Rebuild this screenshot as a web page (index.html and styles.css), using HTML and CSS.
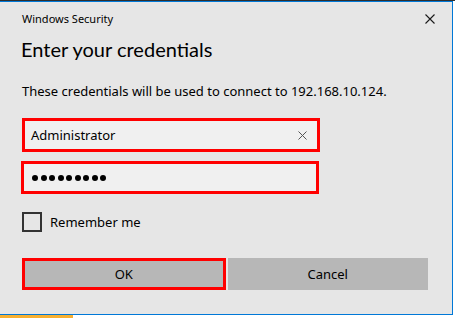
FILE: index.html
```html
<!DOCTYPE html>
<html lang="en">
  <head>
    <meta charset="UTF-8" />
    <title>Windows Security</title>
    <link rel="stylesheet" href="styles.css">
  </head>
  <body>
    <div class="top-strip"></div>
    <div class="dialog">
      <div class="header">
        <span class="caption">Windows Security</span>
        <svg class="close" width="10" height="10" viewBox="0 0 10 10">
          <path d="M0.5 0.5 L9.5 9.5 M9.5 0.5 L0.5 9.5" stroke="#1a1a1a" stroke-width="1.1" fill="none" />
        </svg>
      </div>
      <h2>Enter your credentials</h2>
      <p class="message">These credentials will be used to connect to 192.168.10.124.</p>

      <div class="field user">
        <span class="value">Administrator</span>
        <svg class="clear" width="9" height="9" viewBox="0 0 9 9">
          <path d="M0.5 0.5 L8.5 8.5 M8.5 0.5 L0.5 8.5" stroke="#555" stroke-width="1" fill="none" />
        </svg>
      </div>
      <div class="field pass">
        <span class="dot"></span><span class="dot"></span><span class="dot"></span>
        <span class="dot"></span><span class="dot"></span><span class="dot"></span>
        <span class="dot"></span><span class="dot"></span><span class="dot"></span>
      </div>

      <label class="remember">
        <span class="box"></span>
        <span>Remember me</span>
      </label>

      <div class="buttons">
        <button class="ok">OK</button>
        <button class="cancel">Cancel</button>
      </div>
    </div>
    <div class="taskbar"></div>
  </body>
</html>
```

FILE: styles.css
```css
body {
  margin: 0;
  background: #ffffff;
  font-family: "Noto Sans", "Open Sans", sans-serif;
  color: #000;
  width: 455px;
  height: 318px;
  overflow: hidden;
}

.top-strip {
  height: 1px;
  background: #2e2e2e;
}

.dialog {
  box-sizing: border-box;
  width: 453px;
  height: 314px;
  background: #e6e6e6;
  border-top: 1px solid #0078d7;
  border-right: 1px solid #0078d7;
  border-bottom: 1px solid #0078d7;
  padding: 0 24px 0 22px;
}

.header {
  height: 34px;
  display: flex;
  align-items: center;
  justify-content: space-between;
  margin-right: -7px;
}

.caption {
  font-size: 11px;
  line-height: 16px;
}

h2 {
  margin: 0;
  font-family: Lato, "Noto Sans", sans-serif;
  font-size: 20px;
  font-weight: normal;
  line-height: 26px;
  margin-left: -1px;
}

.message {
  margin: 20px 0 0;
  font-size: 13px;
  line-height: 18px;
}

.field {
  box-sizing: border-box;
  width: 298px;
  display: flex;
  align-items: center;
  background: #f0f0f0;
  border: 3px solid #ff0000;
  padding: 0 0 0 6px;
}

.user {
  height: 34px;
  margin-top: 18px;
  justify-content: space-between;
  padding-right: 10px;
}

.value {
  font-size: 13px;
  line-height: 18px;
}

.pass {
  height: 33px;
  margin-top: 9px;
  margin-left: -1px;
  gap: 2.5px;
  padding-left: 8px;
}

.dot {
  width: 6px;
  height: 6px;
  border-radius: 50%;
  background: #000;
}

.remember {
  display: flex;
  align-items: center;
  gap: 8px;
  margin-top: 18px;
  font-size: 13px;
  line-height: 18px;
}

.box {
  box-sizing: border-box;
  width: 20px;
  height: 20px;
  border: 2px solid #333;
}

.buttons {
  display: flex;
  gap: 2px;
  margin-top: 26px;
}

button {
  box-sizing: border-box;
  height: 32px;
  background: #b7b7b7;
  border: none;
  font-family: inherit;
  font-size: 13px;
  color: #000;
  padding: 0;
}

.ok {
  width: 204px;
  border: 3px solid #ff0000;
}

.cancel {
  width: 201px;
}

.taskbar {
  width: 73px;
  height: 3px;
  background: #f7b032;
}
```
